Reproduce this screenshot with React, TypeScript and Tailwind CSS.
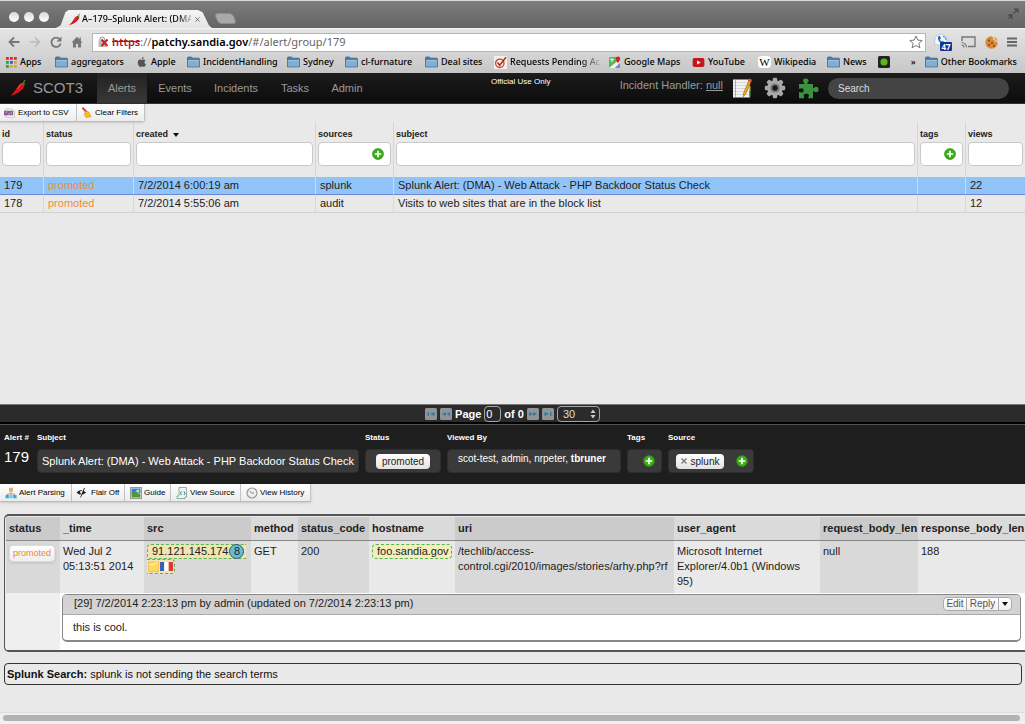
import React from "react";

const uiFont = "font-['Noto_Sans',sans-serif]";

function Chili({ className }: { className: string }) {
  return (
    <svg viewBox="0 0 18 18" className={className} aria-hidden="true">
      <path d="M13 4.200c2.200.2 3 2 1.800 4C12.500 12 7.500 15.500 1.200 16.600 4.500 14.600 6 12 8 8.800 9.600 6 11 4.200 13 4.200Z" fill="#d8141b" />
      <path d="M12.800 5c-2 .8-3 2.900-4.300 4.800" stroke="#f0575a" strokeWidth="1" fill="none" />
      <path d="M11.600 5c.8-1 1.800-1.200 2.500-1C14 2.800 14.600 1.600 15.800 1l.9.7c-1 .6-1.500 1.600-1.400 2.800.6.500.8 1.200.7 2-1.300-1.200-2.700-1.700-4.400-1.500Z" fill="#3f8a2c" />
    </svg>
  );
}

function Folder() {
  return (
    <svg viewBox="0 0 13 12" className="h-3 w-[13px] shrink-0" aria-hidden="true">
      <path d="M.5 1.800Q.5 1 1.300 1H4.500L5.500 2.200H11.500Q12.500 2.200 12.500 3.200V10.500H.5Z" fill="#4d7fab" stroke="#39678f" strokeWidth=".8" />
      <path d="M.5 3.800H12.500V11H.5Z" fill="#82aed2" stroke="#4575a0" strokeWidth=".8" />
      <path d="M1.200 4.600H11.800" stroke="#b3cfe8" strokeWidth=".8" />
    </svg>
  );
}

function AppsIcon() {
  const colors = ["#e02b2b", "#e02b2b", "#e02b2b", "#2ba14b", "#2b62d8", "#e8a32b", "#2ba14b", "#e8a32b", "#e8a32b"];
  return (
    <svg viewBox="0 0 11 11" className="h-[11px] w-[11px] shrink-0" aria-hidden="true">
      {colors.map((c, i) => (
        <rect key={i} x={(i % 3) * 4} y={Math.floor(i / 3) * 4} width="2.800" height="2.800" fill={c} />
      ))}
    </svg>
  );
}

function AppleIcon() {
  return (
    <svg viewBox="0 0 24 24" className="h-3 w-3 shrink-0" aria-hidden="true">
      <path fill="#555" d="M17 12.600c0-2.500 2-3.700 2.100-3.800-1.200-1.700-3-1.900-3.600-2-1.500-.2-3 .9-3.800.9s-2-.9-3.200-.9C6.800 6.800 5.200 7.800 4.400 9.300c-1.800 3-.5 7.600 1.200 10.100.9 1.200 1.900 2.600 3.200 2.500 1.300 0 1.800-.8 3.300-.8 1.600 0 2 .8 3.400.8 1.400 0 2.300-1.200 3.100-2.400 1-1.400 1.400-2.800 1.400-2.900-.1 0-3-1.100-3-4Zm-2.500-7.400c.7-.8 1.200-2 1-3.200-1 0-2.200.7-2.900 1.500-.7.700-1.200 1.900-1.100 3.100 1.100.1 2.300-.6 3-1.400Z" />
    </svg>
  );
}

function CheckMark() {
  return (
    <svg viewBox="0 0 13 13" className="h-[13px] w-[13px] shrink-0" aria-hidden="true">
      <rect width="13" height="13" fill="#f5efec" />
      <circle cx="5.800" cy="7.300" r="4.200" fill="none" stroke="#c4472f" strokeWidth="1.300" />
      <path d="M3.500 6.500 5.700 9.300 12 1.200" fill="none" stroke="#a92f1e" strokeWidth="1.500" />
    </svg>
  );
}

function MapsIcon() {
  return (
    <svg viewBox="0 0 12 12" className="h-3 w-3 shrink-0" aria-hidden="true">
      <rect y="1" width="11" height="11" rx="1.500" fill="#5bb45a" />
      <path d="M0 12 11 3V7L6 12Z" fill="#f4f4f4" />
      <path d="M6 12 11 7V12Z" fill="#5d92e0" />
      <path d="M1 3.500h4M3 2v4" stroke="#e9f5e9" strokeWidth="1.200" />
      <path d="M9 7.500C8.500 5.500 6.800 4.800 6.800 2.700a2.200 2.200 0 0 1 4.400 0C11.200 4.800 9.500 5.500 9 7.500Z" fill="#d81f26" />
    </svg>
  );
}

function YouTubeIcon() {
  return (
    <svg viewBox="0 0 13 10" className="h-[9px] w-[13px] shrink-0" aria-hidden="true">
      <rect width="13" height="10" rx="2" fill="#c4161c" />
      <path d="M5 2.800 9 5 5 7.200Z" fill="#fff" />
    </svg>
  );
}

function WikiIcon() {
  return (
    <span className="flex h-3 w-[13px] shrink-0 items-center justify-center rounded-sm bg-white font-['Liberation_Serif',serif] text-[11px] font-normal leading-3 text-black">
      W
    </span>
  );
}

function GreenDot() {
  return (
    <svg viewBox="0 0 12 12" className="h-3 w-3 shrink-0" aria-hidden="true">
      <rect width="12" height="12" rx="1.500" fill="#222" />
      <circle cx="6" cy="6" r="3.600" fill="#58b81c" />
    </svg>
  );
}

const bookmarks: { label: string; icon: React.ReactNode; width: string }[] = [
  { label: "Apps", icon: <AppsIcon />, width: "w-[49px]" },
  { label: "aggregators", icon: <Folder />, width: "w-[81px]" },
  { label: "Apple", icon: <AppleIcon />, width: "w-[51px]" },
  { label: "IncidentHandling", icon: <Folder />, width: "w-[100px]" },
  { label: "Sydney", icon: <Folder />, width: "w-[58px]" },
  { label: "cl-furnature", icon: <Folder />, width: "w-[80px]" },
  { label: "Deal sites", icon: <Folder />, width: "w-[69px]" },
  { label: "Requests Pending Ac", icon: <CheckMark />, width: "w-[115px]" },
  { label: "Google Maps", icon: <MapsIcon />, width: "w-[83px]" },
  { label: "YouTube", icon: <YouTubeIcon />, width: "w-[66px]" },
  { label: "Wikipedia", icon: <WikiIcon />, width: "w-[69px]" },
  { label: "News", icon: <Folder />, width: "w-[51px]" },
  { label: "", icon: <GreenDot />, width: "w-3" },
];

function Browser() {
  return (
    <div className={`${uiFont} text-black`}>
      <div className="flex h-7 items-end border-t border-[#d8d8d8] bg-linear-to-b from-[#7d7d7d] to-[#646464]">
        <div className="flex h-full w-[56px] items-center gap-[5px] pl-[9px] pt-1">
          {[0, 1, 2].map((n) => (
            <span key={n} className="h-[10px] w-[10px] rounded-full bg-linear-to-b from-[#d8d8d8] to-white" />
          ))}
        </div>
        <div className="flex h-[18px] w-[156px] items-center bg-linear-to-b from-[#f4f4f4] to-[#e4e4e4] pl-3 [clip-path:polygon(0_100%,3%_85%,6%_12%,8%_0,91%_0,94%_12%,98%_85%,100%_100%)]">
          <Chili className="h-[13px] w-[13px] shrink-0" />
          <span className="w-[110px] overflow-hidden whitespace-nowrap bg-linear-to-r from-black from-85% to-[#bbb] bg-clip-text pl-px text-[9px] font-medium text-transparent">
            A–179–Splunk Alert: (DMA
          </span>
          <button aria-label="Close tab" className="ml-1 text-[#666]">
            <svg viewBox="0 0 6 6" className="h-[5px] w-[5px]"><path d="M.5.5l5 5M5.500.5l-5 5" stroke="currentColor" strokeWidth="1.100" /></svg>
          </button>
        </div>
        <button aria-label="New tab" className="mb-1 ml-1 h-[11px] w-[19px] skew-x-[22deg] rounded-sm border border-[#8d8d8d] bg-[#a9a9a9]" />
        <svg viewBox="0 0 12 12" className="mb-2 ml-auto mr-[6px] h-3 w-3" aria-hidden="true">
          <path d="M6.500 5.500 10.500 1.500M7 1.200H10.900V5M5.500 6.500 1.500 10.500M1.200 7H5V10.900" fill="none" stroke="#4a4a4a" strokeWidth="1.400" />
        </svg>
      </div>

      <div className="flex h-[23px] items-center border-t border-[#f6f6f6] bg-linear-to-b from-[#e4e4e4] to-[#d6d6d6] pl-2 pr-2 pt-1">
        <div className="flex w-[84px] shrink-0 items-center gap-[9px]">
          <button aria-label="Back">
            <svg viewBox="0 0 12 12" className="h-3 w-3"><path d="M11.500 6H1.500M6 1.500 1.500 6 6 10.500" fill="none" stroke="#777" strokeWidth="1.800" /></svg>
          </button>
          <button aria-label="Forward">
            <svg viewBox="0 0 12 12" className="h-3 w-3"><path d="M.5 6H10.500M6 1.500 10.500 6 6 10.500" fill="none" stroke="#b9b9b9" strokeWidth="1.500" /></svg>
          </button>
          <button aria-label="Reload">
            <svg viewBox="0 0 12 12" className="h-3 w-3"><path d="M10 3.500A4.700 4.700 0 1 0 10.700 7.500" fill="none" stroke="#777" strokeWidth="1.800" /><path d="M11.500.5V5.500H6.500Z" fill="#777" /></svg>
          </button>
          <button aria-label="Home">
            <svg viewBox="0 0 12 12" className="h-3 w-3"><path d="M6 .8.5 6.500H2V11.500H5V8H7V11.500H10V6.500H11.500L9.800 4.700V1.500H8.500V3.300Z" fill="#777" /></svg>
          </button>
        </div>
        <div className="flex h-[19px] grow items-center border border-[#b5b5b5] bg-white pl-1">
          <svg viewBox="0 0 12 12" className="h-3 w-3 shrink-0" aria-hidden="true">
            <path d="M3 5V3.500a2.300 2.300 0 0 1 4.600 0V5" fill="none" stroke="#aaa" strokeWidth="1.200" />
            <rect x="1.500" y="4.500" width="7.500" height="6.500" fill="#bbb" />
            <path d="M4.500 3.500 10.500 10M10.500 3.500 4.500 10" stroke="#cf1f1f" strokeWidth="2" />
          </svg>
          <span className="ml-[3px] grow whitespace-nowrap text-[11px] leading-4 text-[#666]">
            <span className="font-semibold text-[#b3141c] line-through">https</span>://
            <span className="font-semibold text-black">patchy.sandia.gov</span>/#/alert/group/179
          </span>
          <button aria-label="Bookmark this page" className="mr-[2px]">
            <svg viewBox="0 0 14 14" className="h-[14px] w-[14px]"><path d="M7 1 8.800 5.100 13.200 5.500 9.900 8.400 10.900 12.800 7 10.500 3.100 12.800 4.100 8.400.8 5.500 5.200 5.100Z" fill="#fff" stroke="#777" /></svg>
          </button>
        </div>
        <div className="flex shrink-0 items-center gap-[9px] pl-2">
          <svg viewBox="0 0 18 18" className="h-[18px] w-[18px]" aria-hidden="true">
            <path d="M7.500 1.500a6 5.500 0 1 1-4 9.800L.8 12V7A6 5.500 0 0 1 7.500 1.500Z" fill="#f5f8fc" stroke="#b5bdc8" strokeWidth=".7" />
            <path d="M4.500 3c-2 3 1.500 8 5.500 8L10.500 8.800 8 8 7 8.500 5.800 6.500 7 5.500 6 3Z" fill="#2667c9" />
            <path d="M9 3.500C11 4 12 5 12 7" fill="none" stroke="#2667c9" />
            <rect x="6" y="9" width="12" height="9" rx="1" fill="#15329a" />
            <text x="12" y="16.500" textAnchor="middle" fontSize="8" fontWeight="700" fill="#fff">47</text>
          </svg>
          <svg viewBox="0 0 15 12" className="h-3 w-[15px]" aria-hidden="true">
            <path d="M1 5V1H14V10.500H7" fill="none" stroke="#777" strokeWidth="1.400" />
            <path d="M.5 6.500A5 5 0 0 1 5.500 11.500M.5 9A2.500 2.500 0 0 1 3 11.500" fill="none" stroke="#777" strokeWidth="1.100" />
          </svg>
          <svg viewBox="0 0 13 13" className="h-[13px] w-[13px]" aria-hidden="true">
            <path d="M6.500.3A6.200 6.200 0 1 0 12.700 6.500L11 5.500 9.800 5.800 9.500 4 8 3.500 8.200 1.500Z" fill="#d98a35" />
            <path d="M8.500.8 12 2.500 12.500 5 10.500 4.500Z" fill="#e19a4c" />
            <circle cx="4" cy="4.500" r="1.100" fill="#8a4513" /><circle cx="7" cy="7" r="1.100" fill="#8a4513" /><circle cx="4" cy="9" r="1" fill="#8a4513" /><circle cx="9" cy="10" r="1" fill="#8a4513" />
          </svg>
          <button aria-label="Menu">
            <svg viewBox="0 0 10 10" className="h-[10px] w-[10px]"><path d="M0 1.500H10M0 5H10M0 8.500H10" stroke="#666" strokeWidth="2" /></svg>
          </button>
        </div>
      </div>

      <nav aria-label="Bookmarks" className="flex h-[22px] items-center bg-linear-to-b from-[#d6d6d6] to-[#c6c6c6] pl-[6px] pr-2 text-[9px] font-medium">
        {bookmarks.map((b, i) => (
          <a key={i} href="#bookmark" aria-label={b.label || "Status"} className={`flex shrink-0 items-center gap-[3px] whitespace-nowrap ${b.width}`}>
            {b.icon}
            {b.label.startsWith("Requests") ? (
              <span className="bg-linear-to-r from-black from-75% to-[#bbb] bg-clip-text text-transparent">{b.label}</span>
            ) : (
              b.label
            )}
          </a>
        ))}
        <button aria-label="More bookmarks" className="ml-auto mr-[9px]">»</button>
        <a href="#other" className="flex shrink-0 items-center gap-[3px] whitespace-nowrap"><Folder />Other Bookmarks</a>
      </nav>
    </div>
  );
}

function TopNav() {
  return (
    <header className="flex h-[31px] items-center border-b border-[#333] bg-linear-to-b from-[#1c1c1c] to-[#0c0c0c] text-[11px] text-[#9a9a9a]">
      <a href="#home" className="flex w-[97px] shrink-0 items-center pl-[9px] text-[15px]">
        <Chili className="mr-[6px] h-[18px] w-[18px]" />
        SCOT3
      </a>
      <nav className="flex h-full shrink-0 items-center">
        <a href="#alerts" className="flex h-full w-[50px] items-center justify-center bg-linear-to-b from-[#222] to-[#383838]">Alerts</a>
        <a href="#events" className="w-[56px] text-center">Events</a>
        <a href="#incidents" className="w-[66px] text-center">Incidents</a>
        <a href="#tasks" className="w-[52px] text-center">Tasks</a>
        <a href="#admin" className="w-[52px] text-center">Admin</a>
      </nav>
      <div className="grow self-start pl-[118px] pt-[3px] text-[8px] leading-[11px] text-white">Official Use Only</div>
      <div className="mb-[5px] mr-[5px] shrink-0 whitespace-nowrap">
        Incident Handler: <a href="#handler" className="underline">null</a>
      </div>
      <div className="flex shrink-0 items-center gap-3 pl-1">
        <svg viewBox="0 0 20 20" className="h-5 w-5" aria-hidden="true">
          <rect x="1" y="1.500" width="17" height="18" fill="#f3f3f0" />
          <path d="M1 4.500H18M1 7.500H18M1 10.500H18M1 13.500H18M1 16.500H18" stroke="#c8c8d6" strokeWidth=".7" />
          <path d="M3.500 1.500V19.500" stroke="#e27a7a" strokeWidth=".8" />
          <path d="M16 1.500h2v6h-2z" fill="#d64545" /><path d="M17 8h1.500v5H17z" fill="#e4b13b" /><path d="M17 13h1.500v6H17z" fill="#3fae49" />
          <path d="M17.500.8 19.700 2 13.700 16 11.200 18.800 11.500 15.300Z" fill="#f0a91c" stroke="#9b6410" strokeWidth=".6" />
          <path d="M17.500.8 19.700 2 18.800 3.800 16.600 2.700Z" fill="#d84c4c" />
        </svg>
        <svg viewBox="0 0 22 22" className="h-[22px] w-[22px]" aria-hidden="true">
          <g fill="#a9a9a9">
            {[0, 45, 90, 135, 180, 225, 270, 315].map((a) => (
              <rect key={a} x="8.800" y="0.800" width="4.400" height="6" rx="1.200" transform={`rotate(${a} 11 11)`} />
            ))}
            <circle cx="11" cy="11" r="7.800" />
          </g>
          <circle cx="11" cy="11" r="4.600" fill="#777" />
          <circle cx="11" cy="11" r="2.700" fill="#1b1b1b" />
        </svg>
        <svg viewBox="0 0 21 21" className="h-[21px] w-[21px]" aria-hidden="true">
          <path d="M1 6H6.300C7 5 5 4.300 5 2.700 5 1.400 6.200.6 7.800.6s2.800.8 2.800 2.100C10.600 4.300 8.700 5 9.500 6H15V10C16 10.600 16.500 8.800 18.200 8.800c1.500 0 2.400 1.200 2.400 2.700s-.9 2.700-2.400 2.700C16.500 14.200 16 12.600 15 13V20.300H10.500C9.700 19.500 11 18.800 11 17.500 11 16.300 9.800 15.700 8.300 15.700s-2.700.6-2.700 1.800C5.600 18.800 7 19.500 6 20.300H1V14.500C1.800 13.500 2.500 14.600 3.800 14.600 5 14.600 5.600 13.500 5.600 12.400S5 10.200 3.800 10.200C2.500 10.200 1.800 11.300 1 10.500Z" fill="#3d9140" />
        </svg>
      </div>
      <input aria-label="Search" placeholder="Search" className="ml-[9px] mr-4 h-[21px] w-[181px] shrink-0 rounded-full bg-[#444] px-[10px] text-[10px] text-white placeholder:text-[#ddd] placeholder:opacity-100" />
    </header>
  );
}

function Plus({ label }: { label: string }) {
  return (
    <button aria-label={label} className="shrink-0">
      <svg viewBox="0 0 12 12" className="h-3 w-3">
        <circle cx="6" cy="6" r="5.500" fill="#36b013" stroke="#2c8a12" strokeWidth=".6" />
        <path d="M6 2.800V9.200M2.800 6H9.200" stroke="#fff" strokeWidth="1.700" />
      </svg>
    </button>
  );
}

const toolButton = "flex h-full items-center whitespace-nowrap border-r border-[#c2c2c2] bg-linear-to-b from-white to-[#ececec] text-[8px] text-black";
const filterBox = "h-6 w-full rounded border border-[#c9c9c9] bg-white";

const columns = [
  { name: "id", width: "w-[44px]" },
  { name: "status", width: "w-[90px]" },
  { name: "created", width: "w-[182px]" },
  { name: "sources", width: "w-[78px]" },
  { name: "subject", width: "" },
  { name: "tags", width: "w-[48px]" },
  { name: "views", width: "w-[59px]" },
];

const alerts = [
  ["179", "promoted", "7/2/2014 6:00:19 am", "splunk", "Splunk Alert: (DMA) - Web Attack - PHP Backdoor Status Check", "", "22"],
  ["178", "promoted", "7/2/2014 5:55:06 am", "audit", "Visits to web sites that are in the block list", "", "12"],
];

function AlertGrid() {
  return (
    <section className="min-h-[300px]">
      <div className="flex">
        <div className="flex h-[18px] rounded-br border-b border-[#bbb] shadow-sm">
          <button className={`${toolButton} w-[77px]`}>
            <svg viewBox="0 0 12 10" className="ml-1 mr-[3px] h-[10px] w-[11px] shrink-0" aria-hidden="true">
              <path d="M2 .5H9L11.500 3V9.500H2Z" fill="#fff" stroke="#aaa" strokeWidth=".7" />
              <rect y="2.500" width="10" height="5" fill="#8a5a91" />
              <path d="M1.500 4h2M4.500 6h2M7.500 4l1 2" stroke="#e7d5ea" strokeWidth=".8" />
            </svg>
            Export to CSV
          </button>
          <button className={`${toolButton} w-[68px]`}>
            <svg viewBox="0 0 12 12" className="ml-1 mr-[3px] h-[11px] w-[11px] shrink-0" aria-hidden="true">
              <path d="M1.500.8 6.500 6" stroke="#c33f22" strokeWidth="2" />
              <path d="M5 4.500 8.500 5.500 11 10.500 5.500 11.500 3.500 8Z" fill="#f3bd24" stroke="#d18d12" strokeWidth=".6" />
            </svg>
            Clear Filters
          </button>
        </div>
      </div>
      <table className="w-full table-fixed border-separate border-spacing-0 text-left text-[11px] text-[#222]">
        <colgroup>
          {columns.map((c) => <col key={c.name} className={c.width} />)}
        </colgroup>
        <thead>
          <tr>
            {columns.map((c) => (
              <th key={c.name} className="border-r border-[#d6d6d6] px-[2px] pb-[11px] pt-[6px] align-top font-bold last:border-r-0">
                <div className="flex h-[14px] items-center text-[9px]">
                  {c.name}
                  {c.name === "created" && (
                    <svg viewBox="0 0 6 4" className="ml-[5px] h-1 w-[6px]" aria-hidden="true"><path d="M0 0H6L3 4Z" fill="#111" /></svg>
                  )}
                </div>
                {c.name === "sources" || c.name === "tags" ? (
                  <div className={`${filterBox} flex items-center justify-end pr-[6px]`}><Plus label={`Add ${c.name} filter`} /></div>
                ) : (
                  <input aria-label={`Filter ${c.name}`} className={`${filterBox} block px-1 font-normal`} />
                )}
              </th>
            ))}
          </tr>
        </thead>
        <tbody>
          {alerts.map((row, r) => (
            <tr key={row[0]} className={r === 0 ? "h-[18px] bg-[#90c4f8]" : "h-[18px]"}>
              {row.map((cell, i) => (
                <td
                  key={i}
                  className={`border-b border-r border-r-[#d3d9df] pb-px pl-1 leading-[15px] last:border-r-0 ${r === 0 ? "border-b-[#6f86d2]" : "border-b-[#d3d3d3]"} ${i === 1 ? "text-[#f58a32]" : ""}`}
                >
                  {cell}
                </td>
              ))}
            </tr>
          ))}
        </tbody>
      </table>
    </section>
  );
}

function PageButton({ label, d }: { label: string; d: string }) {
  return (
    <button aria-label={label}>
      <svg viewBox="0 0 12 12" className="h-3 w-3"><rect width="12" height="12" rx="1.500" fill="#8f9498" /><path d={d} fill="#2c7ba6" /></svg>
    </button>
  );
}

function Pager() {
  return (
    <div className="flex h-5 items-center justify-center gap-[3px] border-b-2 border-t border-b-black border-t-[#777] bg-[#2b2b2b] text-[11px] font-bold leading-4 text-white">
      <PageButton label="First page" d="M2.500 4H4V8H2.500ZM9.500 4V8L5 6Z" />
      <PageButton label="Previous page" d="M6 4V8L2 6ZM10 4V8L6.500 6Z" />
      <label htmlFor="page">Page</label>
      <input id="page" defaultValue="0" className="h-4 w-[17px] rounded border border-[#a5a5a5] bg-[#2b2b2b] pl-px font-normal" />
      <span>of 0</span>
      <PageButton label="Next page" d="M2 4V8L6 6ZM6 4V8L10 6Z" />
      <PageButton label="Last page" d="M2.500 4V8L7 6ZM8 4H9.500V8H8Z" />
      <div className="relative">
        <select aria-label="Rows per page" className="block h-4 w-[43px] appearance-none rounded border border-[#a5a5a5] bg-[#2b2b2b] pl-[5px] font-normal leading-3 text-[#ddd]">
          <option>30</option>
        </select>
        <svg viewBox="0 0 6 10" className="pointer-events-none absolute right-1 top-[3px] h-[10px] w-[6px]" aria-hidden="true"><path d="M.5 4 3 .5 5.500 4ZM.5 6 3 9.500 5.500 6Z" fill="#ccc" /></svg>
      </div>
    </div>
  );
}

const fieldBox = "flex h-6 items-center rounded border border-[#2e2e2e] bg-[#3a3a3a]";

function Field({ label, className, children }: { label: string; className: string; children: React.ReactNode }) {
  return (
    <div className={className}>
      <div className="mb-[5px] text-[8px] font-bold leading-3">{label}</div>
      {children}
    </div>
  );
}

function AlertHeader() {
  return (
    <section className="flex h-[60px] gap-[6px] border-t border-[#555] bg-[#1e1e1e] pl-1 pt-[7px] text-[11px] text-white">
      <Field label="Alert #" className="w-[27px]"><div className="text-[15px] leading-4">179</div></Field>
      <Field label="Subject" className="w-[322px]"><div className={`${fieldBox} whitespace-nowrap px-[4px]`}>Splunk Alert: (DMA) - Web Attack - PHP Backdoor Status Check</div></Field>
      <Field label="Status" className="w-[76px]">
        <div className={`${fieldBox} justify-center`}><button className="h-[15px] w-[54px] rounded-sm bg-linear-to-b from-white to-[#e2e2e2] text-[10px] leading-[15px] text-[#222]">promoted</button></div>
      </Field>
      <Field label="Viewed By" className="w-[174px]"><div className={`${fieldBox} whitespace-nowrap px-[10px] pb-[5px] text-[10px]`}>scot-test, admin, nrpeter,&nbsp;<b>tbruner</b></div></Field>
      <Field label="Tags" className="w-[35px]"><div className={`${fieldBox} justify-end pr-[6px]`}><Plus label="Add tag" /></div></Field>
      <Field label="Source" className="w-[86px]">
        <div className={`${fieldBox} justify-between pl-[7px] pr-[5px]`}>
          <button className="flex h-[15px] w-[48px] items-center justify-center gap-1 rounded-sm bg-linear-to-b from-white to-[#e2e2e2] text-[10px] text-[#222]">
            <svg viewBox="0 0 6 6" className="h-[6px] w-[6px]" aria-hidden="true"><path d="M.5.5l5 5M5.500.5l-5 5" stroke="#777" strokeWidth="1.300" /></svg>
            splunk
          </button>
          <Plus label="Add source" />
        </div>
      </Field>
    </section>
  );
}

function DetailTools() {
  const icon = "ml-[5px] mr-[2px] h-3 w-3 shrink-0";
  return (
    <div className="flex">
      <div className="flex h-[18px] border-b border-[#bbb] shadow-sm">
        <button className={`${toolButton} w-[72px]`}>
          <svg viewBox="0 0 12 12" className={icon} aria-hidden="true">
            <path d="M6 4V7M2.500 9V7H9.500V9" fill="none" stroke="#8a8a8a" strokeWidth=".8" />
            <rect x="4" y=".8" width="4" height="3.800" fill="#e2ad74" /><rect x=".5" y="8" width="3.300" height="3.300" fill="#3ba9cf" /><rect x="4.400" y="8" width="3.300" height="3.300" fill="#7ac6de" /><rect x="8.300" y="8" width="3.300" height="3.300" fill="#3ba9cf" />
          </svg>
          Alert Parsing
        </button>
        <button className={`${toolButton} w-[53px]`}>
          <svg viewBox="0 0 12 12" className="ml-1 mr-1 h-[11px] w-[11px] shrink-0" aria-hidden="true">
            <path d="M.5 6Q5.500.5 11 6 5.500 11 .5 6Z" fill="#222" /><circle cx="5.800" cy="5.500" r="1.500" fill="#ddd" /><path d="M8.500.8 4 11.500" stroke="#fff" strokeWidth="1" /><path d="M9.300 1 5 11.300" stroke="#222" strokeWidth="1" />
          </svg>
          Flair Off
        </button>
        <button className={`${toolButton} w-[46px]`}>
          <svg viewBox="0 0 12 12" className={icon} aria-hidden="true">
            <rect x=".5" y=".5" width="11" height="11" fill="#eee" stroke="#999" /><rect x="1.500" y="1.500" width="9" height="5" fill="#2e84d6" /><path d="M1.500 6 5 5 10.500 7.500V10.500H1.500Z" fill="#4f9c2b" /><circle cx="7.800" cy="4" r="1.500" fill="#f7e15a" />
          </svg>
          Guide
        </button>
        <button className={`${toolButton} w-[70px]`}>
          <svg viewBox="0 0 12 12" className={icon} aria-hidden="true">
            <path d="M3 .5H10.500V10H9V11.500H1V9H3Z" fill="#edf5f3" stroke="#6f9e98" strokeWidth=".8" /><path d="M5.500 4.500 4.500 6.300 5.500 8M8 4.500 9 6.300 8 8" fill="none" stroke="#3d807a" />
          </svg>
          View Source
        </button>
        <button className={`${toolButton} w-[70px]`}>
          <svg viewBox="0 0 12 12" className={icon} aria-hidden="true">
            <circle cx="6" cy="6" r="5" fill="#eee" stroke="#999" strokeWidth="1.200" /><path d="M3.500 3.800 6 6.500 8 5.500" fill="none" stroke="#888" />
          </svg>
          View History
        </button>
      </div>
    </div>
  );
}

const entryColumns = [
  { name: "status", width: "w-[54px]" },
  { name: "_time", width: "w-[84px]" },
  { name: "src", width: "w-[107px]" },
  { name: "method", width: "w-[47px]" },
  { name: "status_code", width: "w-[71px]" },
  { name: "hostname", width: "w-[86px]" },
  { name: "uri", width: "w-[219px]" },
  { name: "user_agent", width: "" },
  { name: "request_body_len", width: "w-[98px]" },
  { name: "response_body_len", width: "w-[107px]" },
];

function EntryTable() {
  const td = "overflow-hidden pl-[3px] pt-[3px] pb-1 align-top odd:bg-[#d9d9d9] even:bg-[#e9e9e9]";
  return (
    <div className="ml-1 rounded-l-[5px] border-y-2 border-l border-[#555] pl-px pt-px">
      <table className="w-full table-fixed border-collapse text-left text-[11px] leading-[15px] text-[#222]">
        <colgroup>
          {entryColumns.map((c) => <col key={c.name} className={c.width} />)}
        </colgroup>
        <thead>
          <tr className="h-[23px] border-b border-[#888]">
            {entryColumns.map((c) => <th key={c.name} className="pl-[3px] font-bold odd:bg-[#cbcbcb] even:bg-[#dadada]">{c.name}</th>)}
          </tr>
        </thead>
        <tbody>
          <tr>
            <td className={td}>
              <button className="mt-px block h-[17px] w-[46px] rounded-sm border border-[#ddd] bg-linear-to-b from-white to-[#eee] text-[9px] leading-[15px] text-[#f5822a] shadow-sm">promoted</button>
            </td>
            <td className={td}>Wed Jul 2<br />05:13:51 2014</td>
            <td className={td}>
              <div className="flex h-[15px] w-[99px] items-center rounded-l border-y border-l border-dashed border-[#55b455] bg-[#efe5b4] pl-1">
                91.121.145.174
                <span className="ml-px flex h-[15px] w-[15px] items-center justify-center rounded-full border border-[#33555f] bg-[#67bcd6]">8</span>
              </div>
              <div className="flex h-[15px] w-7 items-center gap-px rounded-r border-y border-r border-dashed border-[#55b455] bg-[#efe5b4] pl-px">
                <svg viewBox="0 0 11 11" className="h-[11px] w-[11px]" aria-hidden="true"><path d="M.5 1H10.500V10.500H.5Z" fill="#fbd95c" stroke="#e9b93a" strokeWidth=".7" /><path d="M1 3.500H6L7 2H10" fill="none" stroke="#fff3b8" /></svg>
                <svg viewBox="0 0 13 9" className="h-[9px] w-[13px]" aria-hidden="true"><rect width="4.300" height="9" fill="#3c5fb4" /><rect x="4.300" width="4.400" height="9" fill="#fff" /><rect x="8.700" width="4.300" height="9" fill="#e1343f" /></svg>
              </div>
            </td>
            <td className={td}>GET</td>
            <td className={td}>200</td>
            <td className={td}><span className="block w-20 rounded border border-dashed border-[#55b455] bg-[#f5edba] pl-[4px] leading-[13px]">foo.sandia.gov</span></td>
            <td className={`${td} whitespace-nowrap`}>/techlib/access-<br />control.cgi/2010/images/stories/arhy.php?rf</td>
            <td className={`${td} pr-3`}>Microsoft Internet Explorer/4.0b1 (Windows 95)</td>
            <td className={td}>null</td>
            <td className={td}>188</td>
          </tr>
          <tr>
            <td className="bg-[#efefef]" />
            <td colSpan={9} className="bg-white pb-2 pl-[2px] pr-1 pt-px">
              <article className="overflow-hidden rounded-[5px] border border-b-2 border-[#888] bg-white">
                <div className="flex h-[20px] items-center border-b border-[#aaa] bg-[#d3d3d3] pb-px pl-[11px] pr-2">
                  <span className="grow">[<b className="font-medium">29</b>] 7/2/2014 2:23:13 pm by admin (updated on 7/2/2014 2:23:13 pm)</span>
                  <div className="flex h-[14px] divide-x divide-[#aaa] rounded border border-[#aaa] bg-linear-to-b from-white to-[#eee] text-[10px] leading-3 text-[#555]">
                    <button className="w-[23px]">Edit</button>
                    <button className="w-8">Reply</button>
                    <button aria-label="More actions" className="flex w-3 items-center justify-center"><svg viewBox="0 0 6 4" className="h-1 w-[6px]"><path d="M0 0H6L3 4Z" fill="#111" /></svg></button>
                  </div>
                </div>
                <p className="pb-[5px] pl-[10px] pt-[5px]">this is cool.</p>
              </article>
            </td>
          </tr>
        </tbody>
      </table>
    </div>
  );
}

export default function App() {
  return (
    <div className="flex min-h-screen flex-col overflow-hidden bg-[#e9e9e9] font-['Liberation_Sans',Arial,sans-serif]">
      <Browser />
      <TopNav />
      <AlertGrid />
      <Pager />
      <AlertHeader />
      <DetailTools />
      <main className="flex grow flex-col pt-3">
        <EntryTable />
        <p className="ml-1 mr-[3px] mt-[11px] rounded border border-[#333] px-[2px] py-[3px] text-[11px] leading-[14px] text-[#111]">
          <b>Splunk Search:</b> splunk is not sending the search terms
        </p>
      </main>
      <div className="border-t border-[#ddd] bg-[#efefef] px-[3px] pb-[3px] pt-[2px]">
        <div className="mr-[2px] h-[6px] rounded-full bg-[#b2b2b2]" />
      </div>
    </div>
  );
}
